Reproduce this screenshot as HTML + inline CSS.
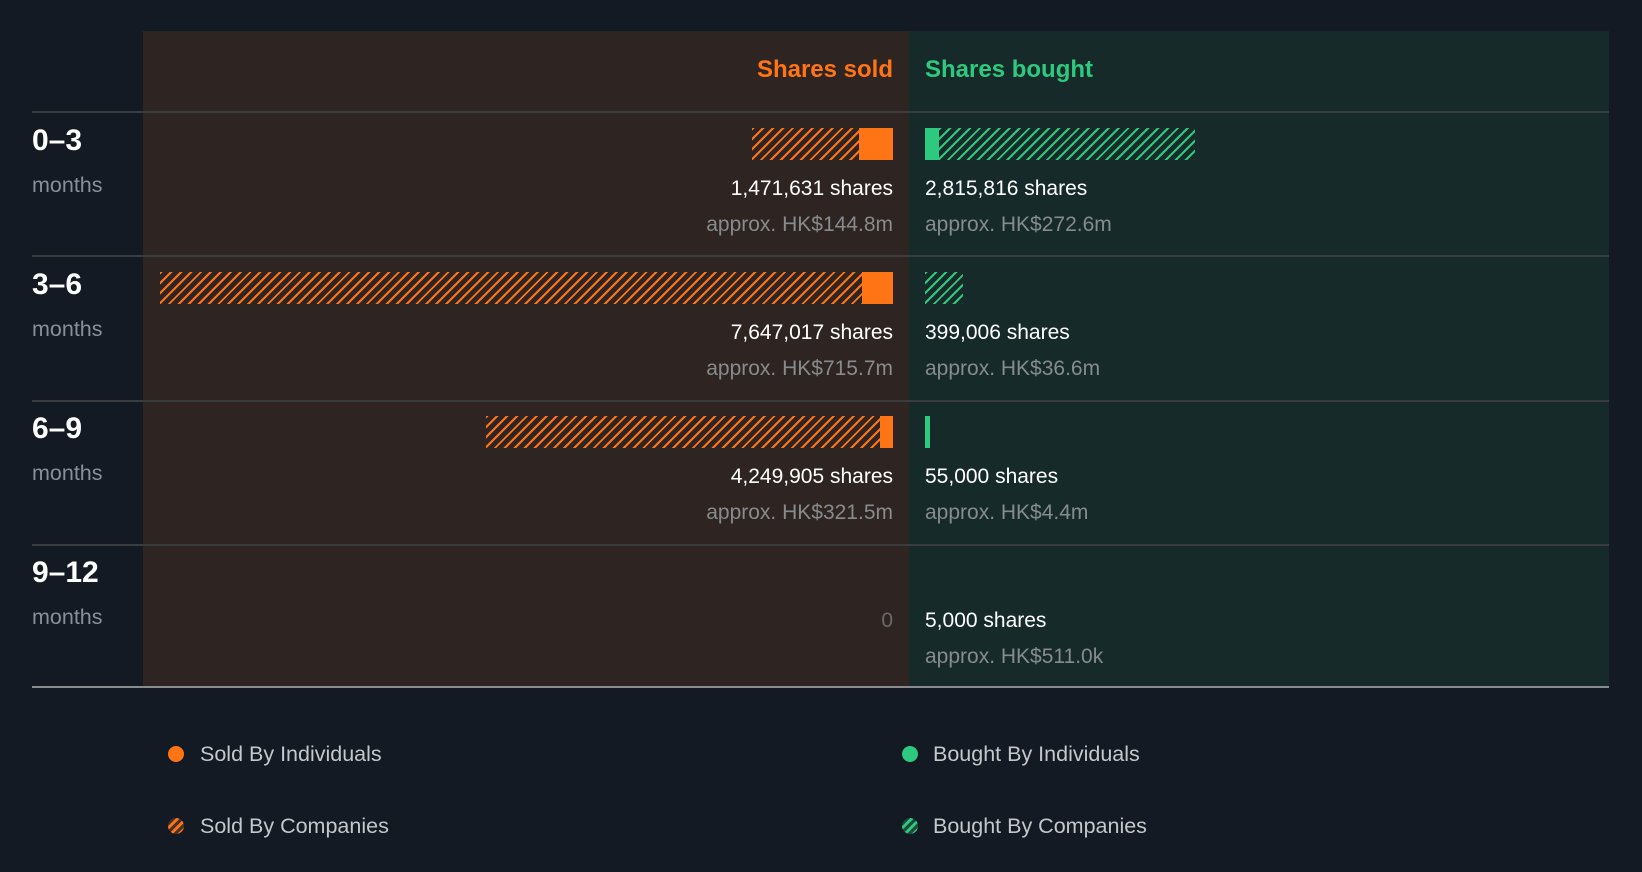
<!DOCTYPE html>
<html><head><meta charset="utf-8"><style>
*{margin:0;padding:0;box-sizing:border-box}
body{width:1642px;height:872px;background:#131a23;position:relative;overflow:hidden;font-family:"Liberation Sans",Arial,sans-serif}
.a{position:absolute}
.sold{left:143px;top:31px;width:766px;height:656px;background:#2e2422}
.bought{left:909px;top:31px;width:700px;height:656px;background:#172a2a}
.hl{left:32px;width:1577px;height:2px;background:#3a3c40}
.lab{left:32px;color:#fff;font-weight:bold;font-size:30px}
.mo{left:32px;color:#8a8f96;font-size:21.5px}
.sh{color:#fff;font-size:21px;white-space:nowrap}
.ap{color:#878b8d;font-size:21px;white-space:nowrap}
.r{right:749px;text-align:right}
.l{left:925px}
.ho{background:repeating-linear-gradient(135deg,#ff7415 0 2px,transparent 2px 7px)}
.hg{background:repeating-linear-gradient(135deg,#2dc97e 0 2px,transparent 2px 7px)}
.o{background:#ff7415}.g{background:#2dc97e}
.leg{color:#c4c7cb;font-size:21.5px}
.dot{width:16px;height:16px;border-radius:50%}
</style></head><body>
<div class="a sold"></div><div class="a bought"></div>
<div class="a" style="right:749px;top:56px;color:#ff7415;font-weight:bold;font-size:24px">Shares sold</div>
<div class="a" style="left:925px;top:56px;color:#2dc97e;font-weight:bold;font-size:24px">Shares bought</div>
<div class="a hl" style="top:111px"></div>
<div class="a hl" style="top:255px"></div>
<div class="a hl" style="top:400px"></div>
<div class="a hl" style="top:544px"></div>
<div class="a" style="left:32px;top:686px;width:1577px;height:2px;background:#8a8d90"></div>

<div class="a lab" style="top:124px">0–3</div><div class="a mo" style="top:173px">months</div>
<div class="a lab" style="top:268px">3–6</div><div class="a mo" style="top:317px">months</div>
<div class="a lab" style="top:412px">6–9</div><div class="a mo" style="top:461px">months</div>
<div class="a lab" style="top:556px">9–12</div><div class="a mo" style="top:605px">months</div>

<!-- row1 -->
<div class="a ho" style="left:752px;top:128px;width:107px;height:32px"></div>
<div class="a o" style="left:859px;top:128px;width:34px;height:32px"></div>
<div class="a g" style="left:925px;top:128px;width:14px;height:32px"></div>
<div class="a hg" style="left:939px;top:128px;width:256px;height:32px"></div>
<div class="a sh r" style="top:177px">1,471,631 shares</div>
<div class="a ap r" style="top:213px">approx. HK$144.8m</div>
<div class="a sh l" style="top:177px">2,815,816 shares</div>
<div class="a ap l" style="top:213px">approx. HK$272.6m</div>
<!-- row2 -->
<div class="a ho" style="left:160px;top:272px;width:702px;height:32px"></div>
<div class="a o" style="left:862px;top:272px;width:31px;height:32px"></div>
<div class="a hg" style="left:925px;top:272px;width:38px;height:32px"></div>
<div class="a sh r" style="top:321px">7,647,017 shares</div>
<div class="a ap r" style="top:357px">approx. HK$715.7m</div>
<div class="a sh l" style="top:321px">399,006 shares</div>
<div class="a ap l" style="top:357px">approx. HK$36.6m</div>
<!-- row3 -->
<div class="a ho" style="left:486px;top:416px;width:394px;height:32px"></div>
<div class="a o" style="left:880px;top:416px;width:13px;height:32px"></div>
<div class="a g" style="left:925px;top:416px;width:5px;height:32px"></div>
<div class="a sh r" style="top:465px">4,249,905 shares</div>
<div class="a ap r" style="top:501px">approx. HK$321.5m</div>
<div class="a sh l" style="top:465px">55,000 shares</div>
<div class="a ap l" style="top:501px">approx. HK$4.4m</div>
<!-- row4 -->
<div class="a ap r" style="top:609px;color:#6a6a6a">0</div>
<div class="a sh l" style="top:609px">5,000 shares</div>
<div class="a ap l" style="top:645px">approx. HK$511.0k</div>

<!-- legend -->
<div class="a dot o" style="left:168px;top:746px"></div>
<div class="a leg" style="left:200px;top:742px">Sold By Individuals</div>
<div class="a dot" style="left:168px;top:818px;background:repeating-linear-gradient(135deg,#ff7415 0 2.5px,#4a3326 2.5px 6px)"></div>
<div class="a leg" style="left:200px;top:814px">Sold By Companies</div>
<div class="a dot g" style="left:902px;top:746px"></div>
<div class="a leg" style="left:933px;top:742px">Bought By Individuals</div>
<div class="a dot" style="left:902px;top:818px;background:repeating-linear-gradient(135deg,#2dc97e 0 2.5px,#1f4a3a 2.5px 6px)"></div>
<div class="a leg" style="left:933px;top:814px">Bought By Companies</div>
</body></html>
